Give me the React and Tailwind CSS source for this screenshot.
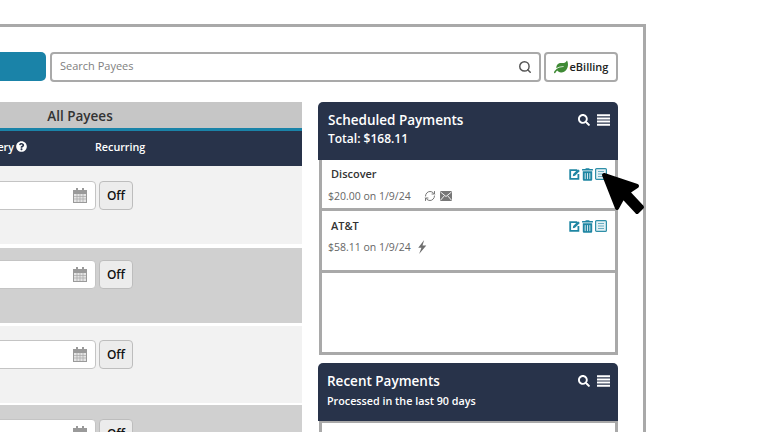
import { FaLeaf, FaQuestionCircle, FaSearch, FaTrashAlt } from 'react-icons/fa'
import { RefreshCw, Search } from 'lucide-react'

const ROWS = [
  { bg: 'bg-[#f2f2f2]', box: 'h-[78px] mt-0', pad: 'pt-[15px]' },
  { bg: 'bg-[#d0d0d0]', box: 'h-[75px] mt-[4px]', pad: 'pt-[12px]' },
  { bg: 'bg-[#f2f2f2]', box: 'h-[77px] mt-[3px]', pad: 'pt-[14px]' },
  { bg: 'bg-[#d0d0d0]', box: 'h-[78px] mt-[2px]', pad: 'pt-[14px]' },
]

function CalendarIcon() {
  return (
    <svg width="14" height="15" viewBox="0 0 14 15" className="text-[#9a9a9a]">
      <rect x="0" y="2" width="14" height="13" fill="currentColor" />
      <rect x="3" y="0" width="2" height="3" fill="currentColor" />
      <rect x="9" y="0" width="2" height="3" fill="currentColor" />
      <rect x="1" y="6" width="12" height="8" fill="#e4e4e4" />
      <path d="M4 6v8M7 6v8M10 6v8M1 8.5h12M1 11h12" stroke="#a8a8a8" strokeWidth="0.7" />
    </svg>
  )
}

function ListIcon() {
  return (
    <svg width="13" height="12" viewBox="0 0 13 12">
      <path d="M0 1.2h13M0 4.4h13M0 7.6h13M0 10.8h13" stroke="currentColor" strokeWidth="2" />
    </svg>
  )
}

function EditIcon() {
  return (
    <svg width="11" height="12" viewBox="0 0 11 12">
      <path d="M8 2.2H1.2v8.6h8.2V6" fill="none" stroke="currentColor" strokeWidth="1.8" />
      <path d="M3.8 8.2l.4-2.2L9 1.2l1.8 1.8L6 7.8z" fill="currentColor" />
    </svg>
  )
}

function DetailIcon() {
  return (
    <svg width="12" height="12" viewBox="0 0 12 12" className="text-[#2f8fa8]">
      <rect x="0.6" y="0.6" width="10.8" height="10.8" rx="1" fill="#e3f0f4" stroke="currentColor" strokeWidth="1.2" />
      <path d="M3 3.5h6M3 6h6M3 8.5h6" stroke="#6aaec2" strokeWidth="1" />
    </svg>
  )
}

function MailIcon() {
  return (
    <svg width="12" height="10" viewBox="0 0 12 10">
      <rect width="12" height="10" rx="1" fill="#777" />
      <path d="M0.5 1l5.5 4.5L11.5 1M0.5 9.2l3.8-4.4M11.5 9.2L7.7 4.8" fill="none" stroke="#fff" strokeWidth="0.9" />
    </svg>
  )
}

function BoltIcon() {
  return (
    <svg width="10" height="14" viewBox="0 0 9 13">
      <path d="M6.5 0L1 7.2h3L1.8 13 8.5 5H5z" fill="#6f6f6f" />
    </svg>
  )
}

function ActionIcons() {
  return (
    <div className="flex items-center gap-[2px] text-[#1f86a3]">
      <EditIcon />
      <FaTrashAlt className="w-[11px] h-[13px]" />
      <DetailIcon />
    </div>
  )
}

function PanelHeader({ title, sub, subClass, pad }) {
  return (
    <div className={`h-[58px] bg-[#28334a] rounded-t-[5px] ${pad} pr-[8px] pt-[8px] text-white`}>
      <div className="flex items-center justify-between">
        <span className="text-[13.5px] leading-[20px] font-[550]">{title}</span>
        <div className="flex items-center gap-[7px]">
          <FaSearch className="w-[12px] h-[12px]" />
          <ListIcon />
        </div>
      </div>
      <p className={`${subClass} font-[550]`}>{sub}</p>
    </div>
  )
}

export default function App() {
  return (
    <div className="h-[432px] w-[768px] overflow-hidden bg-white font-['Open_Sans',sans-serif] relative">
      <div className="mt-[24px] ml-[-142px] w-[788px] h-[420px] border-t-[3px] border-r-[3px] border-[#a9a9a9] pt-[25px]">
        <div className="flex h-[30px]">
          <div className="w-[188px] h-[29px] bg-[#1a83a8] rounded-[5px]" />
          <div className="ml-[4px] w-[491px] flex items-center justify-between border-2 border-[#a9a9a9] rounded-[4px] pl-[8px] pr-[7px]">
            <span className="text-[11px] leading-[14px] mb-[2px] font-medium text-[#808080]">Search Payees</span>
            <Search className="w-[14px] h-[14px] text-[#555]" strokeWidth={2.5} />
          </div>
          <div className="ml-[3px] w-[74px] flex items-center justify-center gap-[2px] border-2 border-[#a9a9a9] rounded-[4px]">
            <FaLeaf className="w-[14px] h-[14px] text-[#3f8a35]" />
            <span className="text-[11px] font-semibold text-[#222]">eBilling</span>
          </div>
        </div>

        <div className="flex mt-[20px]">
          <div className="w-[444px]">
            <div className="h-[26px] bg-[#c6c6c6] text-center text-[13.5px] leading-[28px] font-[550] text-[#333]">
              All Payees
            </div>
            <div className="h-[38px] bg-[#28334a] border-t-[3px] border-[#1a83a8] pb-[2px] flex items-center text-white text-[10.75px] font-[550]">
              <div className="w-[169px] flex items-center justify-end gap-[2px]">
                <span>Delivery</span>
                <FaQuestionCircle className="w-[11px] h-[11px] mb-[2px]" />
              </div>
              <span className="ml-[68px]">Recurring</span>
            </div>
            {ROWS.map((row, i) => (
              <div key={i} className={`${row.box} ${row.bg} ${row.pad} pl-[100px] flex items-start`}>
                <div className="w-[138px] h-[29px] bg-white border border-[#c4c4c4] rounded-[4px] flex items-center justify-end pr-[8px]">
                  <CalendarIcon />
                </div>
                <button className="ml-[3px] w-[34px] h-[29px] bg-[#ececec] border border-[#bdbdbd] rounded-[4px] text-[12px] font-[550] text-[#111]">
                  Off
                </button>
              </div>
            ))}
          </div>

          <div className="ml-[16px] w-[300px]">
            <PanelHeader title="Scheduled Payments" sub="Total: $168.11" subClass="text-[12px] leading-[18px]" pad="pl-[10px]" />
            <div className="h-[195px] ml-[1px] border-x-[3px] border-b-[3px] border-[#a9a9a9] flex flex-col">
              <div className="h-[51px] border-b-[3px] border-[#a9a9a9] pl-[6px] pr-[8px] pt-[6px]">
                <div className="flex items-center justify-between">
                  <span className="pl-[3px] text-[11px] font-[550] text-[#333]">Discover</span>
                  <ActionIcons />
                </div>
                <div className="flex items-center mt-[6px] text-[10.5px] text-[#666]">
                  <span>$20.00 on 1/9/24</span>
                  <RefreshCw className="ml-[13px] w-[12px] h-[12px] text-[#777]" strokeWidth={2} />
                  <span className="ml-[4px]"><MailIcon /></span>
                </div>
              </div>
              <div className="h-[62px] border-b-[3px] border-[#a9a9a9] pl-[6px] pr-[8px] pt-[7px]">
                <div className="flex items-center justify-between">
                  <span className="pl-[3px] text-[11px] font-[550] text-[#333]">AT&amp;T</span>
                  <ActionIcons />
                </div>
                <div className="flex items-center mt-[5px] text-[10.5px] text-[#666]">
                  <span>$58.11 on 1/9/24</span>
                  <span className="ml-[6px]"><BoltIcon /></span>
                </div>
              </div>
            </div>
            <div className="mt-[8px]">
              <PanelHeader title="Recent Payments" sub="Processed in the last 90 days" subClass="text-[10.75px] leading-[18px] mt-[1px]" pad="pl-[9px]" />
              <div className="h-[30px] ml-[1px] border-x-[3px] border-t-[2px] border-[#a9a9a9] flex justify-end pr-[8px] pt-[4px]">
                <ActionIcons />
              </div>
            </div>
          </div>
        </div>
      </div>

      {/* arrow cursor over the page */}
      <svg width="50" height="50" viewBox="0 0 50 50" className="absolute left-[598px] top-[169px]">
        <path
          d="M6 6 L39 17 L30 23 L44 38 L39 43 L25 28 L19 39 Z"
          fill="#000"
          stroke="#000"
          strokeWidth="4"
          strokeLinejoin="round"
        />
      </svg>
    </div>
  )
}
